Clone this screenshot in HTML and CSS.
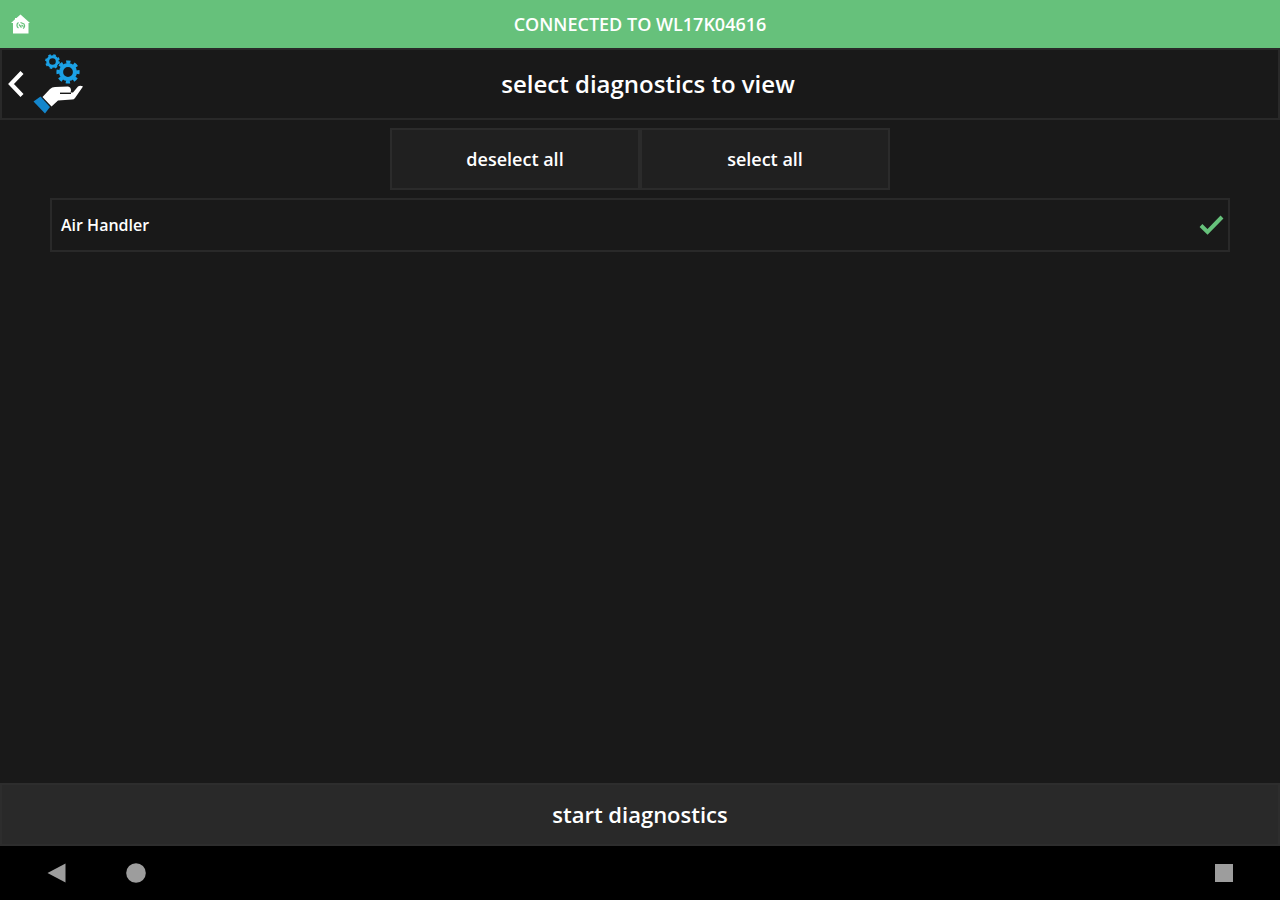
FILE: index.html
```html
<!DOCTYPE html>
<html lang="en">
<head>
<meta charset="utf-8">
<meta name="viewport" content="width=device-width, initial-scale=1">
<title>Select diagnostics to view</title>
<link rel="stylesheet" href="styles.css">
</head>
<body>
<div class="status">
  <svg class="status-home" viewBox="0 0 20 20" aria-hidden="true">
    <path d="M10.500.5 20 9H18.500v10.500H3V9H1L5 5.300V4h1.500z" fill="#fff"/>
    <path d="M8.500 8.500a3.200 3.200 0 0 0 0 5.500M9 10.500l2.500 3M10.500 8.500l3.500 1.500a3 3 0 0 1-1 4.500M11.500 11l2 1.500" fill="none" stroke="#66c17b" stroke-width="1.200"/>
  </svg>
  <span class="status-text">CONNECTED TO WL17K04616</span>
</div>
<header class="header">
  <button class="back" type="button" aria-label="Back">
    <svg class="chevron" viewBox="0 0 18 28" aria-hidden="true"><path d="M16 2.500 5 14l11 11.500" fill="none" stroke="#fff" stroke-width="4.200"/></svg>
    <svg class="service" viewBox="0 0 60 66" aria-hidden="true">
      <g fill="none" stroke="#1ba1e6">
        <circle cx="22.500" cy="10.500" r="4.800" stroke-width="3"/>
        <circle cx="22.500" cy="10.500" r="6.500" stroke-width="1.800" stroke-dasharray="2.553 2.553"/>
        <circle cx="38" cy="21" r="7" stroke-width="4.200"/>
        <circle cx="38" cy="21" r="10" stroke-width="3.200" stroke-dasharray="4.200 3.654" stroke-dashoffset="2.100"/>
      </g>
      <path d="M3.500 50.500 10.500 45.500 20 56 15 62.500z" fill="#1486cc"/>
      <path d="M12.500 46 20 38Q22 36 25 36L38 35.500Q41 36 41 39.500L40.500 41.500H43L48 35.500Q50 34 53 35.500L45 47Q44 48.500 42 48.500L28 49.500 21.500 55.500z" fill="#fff"/>
      <path d="M30 42.300H41" stroke="#191919" stroke-width="1.400"/>
    </svg>
  </button>
  <h1 class="title">select diagnostics to view</h1>
</header>
<main class="content">
  <div class="bulk">
    <button class="bulk-button" type="button">deselect all</button>
    <button class="bulk-button" type="button">select all</button>
  </div>
  <label class="item">
    <span>Air Handler</span>
    <input class="item-check" type="checkbox" checked>
    <svg class="tick" viewBox="0 0 26 22" aria-hidden="true"><path d="M3 11.500 9.500 18 24 3" fill="none" stroke="#66c17b" stroke-width="4"/></svg>
  </label>
</main>
<button class="start" type="button">start diagnostics</button>
<nav class="system" aria-label="System">
  <button class="system-button" type="button" aria-label="Back"><svg class="glyph" viewBox="0 0 20 20"><path d="M1.500 10 19.500.5v19z"/></svg></button>
  <button class="system-button" type="button" aria-label="Home"><svg class="glyph" viewBox="0 0 20 20"><circle cx="10" cy="10" r="9.800"/></svg></button>
  <button class="system-button system-recent" type="button" aria-label="Recent apps"><svg class="glyph" viewBox="0 0 20 20"><rect x="1" y="1" width="18" height="18"/></svg></button>
</nav>
</body>
</html>
```
FILE: styles.css
```css
* {
  box-sizing: border-box;
}

body {
  display: flex;
  flex-direction: column;
  min-height: 100vh;
  margin: 0;
  background: #191919;
  color: #fff;
  font-family: "Open Sans", sans-serif;
  font-weight: 600;
}

button {
  margin: 0;
  padding: 0;
  border: 0;
  background: none;
  color: inherit;
  font: inherit;
  cursor: pointer;
}

svg {
  display: block;
}

.status {
  display: grid;
  grid-template-columns: 20px 1fr 20px;
  align-items: center;
  height: 48px;
  padding: 0 10px;
  background: #66c17b;
}

.status-home {
  width: 20px;
  height: 20px;
}

.status-text {
  text-align: center;
  font-size: 18px;
}

.header {
  display: grid;
  grid-template-columns: 96px 1fr 80px;
  align-items: center;
  height: 72px;
  border: 2px solid #292929;
}

.back {
  display: flex;
  align-items: center;
  padding-left: 4px;
}

.chevron {
  width: 18px;
  height: 28px;
}

.service {
  width: 60px;
  height: 66px;
  margin-left: 6px;
}

.title {
  margin: 0;
  padding-bottom: 2px;
  font-size: 24px;
  font-weight: 600;
  text-align: center;
}

.content {
  flex: 1;
  padding: 8px 50px;
}

.bulk {
  display: flex;
  justify-content: center;
}

.bulk-button {
  width: 250px;
  height: 62px;
  border: 2px solid #2b2b2b;
  background: #202020;
  font-size: 18px;
}

.item {
  display: flex;
  align-items: center;
  justify-content: space-between;
  height: 54px;
  margin-top: 8px;
  padding: 0 4px 0 9px;
  border: 2px solid #292929;
  font-size: 16px;
}

.item-check {
  position: absolute;
  opacity: 0;
}

.tick {
  width: 26px;
  height: 22px;
  visibility: hidden;
}

.item-check:checked + .tick {
  visibility: visible;
}

.start {
  height: 63px;
  padding-bottom: 2px;
  border: 2px solid #2d2d2d;
  background: #292929;
  font-size: 22px;
}

.system {
  display: flex;
  align-items: center;
  gap: 60px;
  height: 54px;
  padding: 0 46px;
  background: #000;
}

.glyph {
  width: 20px;
  height: 20px;
  fill: #9d9d9d;
}

.system-recent {
  margin-left: auto;
}
```
